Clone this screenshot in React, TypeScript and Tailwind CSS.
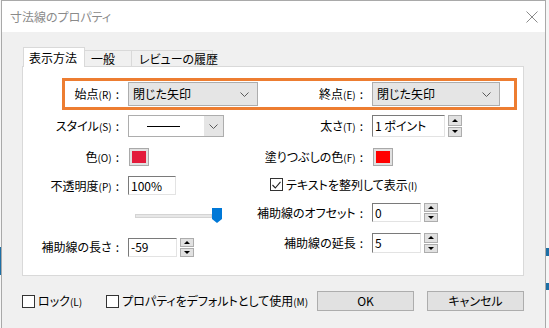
import React from 'react';

const Chevron = () => (
  <svg width="9" height="5" viewBox="0 0 9 5">
    <path d="M0.5 0.5 L4.5 4.5 L8.5 0.5" fill="none" stroke="#5a5a5a" strokeWidth="1" />
  </svg>
);

const Lbl: React.FC<{ text: string; k?: string }> = ({ text, k }) => (
  <span className="whitespace-nowrap">
    {text}
    {k && <span className="text-[10px]">({k})</span>}
    <span className="ml-[4px]">:</span>
  </span>
);

const GrayCombo: React.FC<{ w: string }> = ({ w }) => (
  <div className={`flex items-center h-[24px] ${w} bg-[#e5e5e5] border border-[#adadad] pl-[4px] pr-[8px]`}>
    <span className="flex-1">閉じた矢印</span>
    <Chevron />
  </div>
);

const TextBox: React.FC<{ w: string; h: string; value: string }> = ({ w, h, value }) => (
  <div
    className={`${w} ${h} bg-white border border-[#e3e3e3] border-t-[#7a7a7a] border-l-[#7a7a7a] flex items-center pl-[2px] leading-none whitespace-nowrap`}
  >
    {value}
  </div>
);

const Spinner: React.FC<{ h: string }> = ({ h }) => (
  <div className={`flex flex-col ml-[3px] w-[14px] ${h} gap-[1px]`}>
    <div className="flex-1 flex items-center justify-center bg-[#e1e1e1] border border-[#adadad]">
      <svg width="6" height="3" viewBox="0 0 6 3">
        <path d="M0 3 L3 0 L6 3 Z" fill="#000" />
      </svg>
    </div>
    <div className="flex-1 flex items-center justify-center bg-[#e1e1e1] border border-[#adadad]">
      <svg width="6" height="3" viewBox="0 0 6 3">
        <path d="M0 0 L3 3 L6 0 Z" fill="#000" />
      </svg>
    </div>
  </div>
);

const Swatch: React.FC<{ color: string }> = ({ color }) => (
  <div className="w-[20px] h-[18px] bg-[#e1e1e1] border border-[#a9a9a9] p-[2px]">
    <div className={`w-full h-full ${color}`} />
  </div>
);

const Box: React.FC<{ checked?: boolean }> = ({ checked }) => (
  <div className="w-[13px] h-[13px] bg-white border border-[#333] flex items-center justify-center">
    {checked && (
      <svg width="9" height="8" viewBox="0 0 9 8">
        <path d="M0.5 4 L3.3 7 L8.5 0.8" fill="none" stroke="#222" strokeWidth="1.1" />
      </svg>
    )}
  </div>
);

export default function App() {
  return (
    <div className="relative w-[549px] h-[328px] overflow-hidden bg-[#f6f6f6] text-[12px] text-black font-['Noto_Sans_CJK_JP',sans-serif] [font-feature-settings:'palt']">
      <span className="absolute left-0 top-[247px] w-[1px] h-[28px] bg-[#1d6fa5]" />
      <span className="absolute left-[546px] top-[248px] w-[3px] h-[8px] bg-[#1d6fa5]" />
      <span className="absolute left-[546px] top-[283px] w-[3px] h-[7px] bg-[#1d6fa5]" />

      <div className="ml-[1px] w-[545px] h-[328px] border-x border-t border-[#a9a9a9] bg-[#f0f0f0]">
        {/* title bar */}
        <div className="h-[31px] bg-white flex items-center justify-between pl-[8px] pr-[7px]">
          <span className="text-[#8a8a8a]">寸法線のプロパティ</span>
          <svg width="12" height="12" viewBox="0 0 12 12">
            <path d="M0.5 0.5 L11.5 11.5 M11.5 0.5 L0.5 11.5" stroke="#8a8a8a" strokeWidth="1" />
          </svg>
        </div>

        <div className="pt-[15px] pl-[20px]">
          {/* tabs */}
          <div className="flex items-end h-[19px] pl-[1px] whitespace-nowrap">
            <div className="relative z-10 -mb-px h-[20px] w-[62px] bg-white border-x border-t border-[#d9d9d9] flex items-center pl-[5px]">
              表示方法
            </div>
            <div className="h-[16px] w-[47px] border-r border-t border-[#d9d9d9] flex items-center pl-[6px]">
              一般
            </div>
            <div className="h-[16px] w-[81px] border-r border-t border-[#d9d9d9] flex items-center pl-[7px]">
              レビューの履歴
            </div>
          </div>

          {/* panel */}
          <div className="w-[502px] h-[210px] bg-white border border-[#d9d9d9]">
            <div className="mt-[11px] ml-[39px] w-[455px] h-[32px] border-[3px] border-[#ed7d31] flex items-center">
              <div className="w-[57px] flex justify-end pr-[3px]">
                <Lbl text="始点" k="R" />
              </div>
              <div className="ml-[6px]">
                <GrayCombo w="w-[130px]" />
              </div>
              <div className="w-[108px] flex justify-end pr-[3px]">
                <Lbl text="終点" k="E" />
              </div>
              <div className="ml-[6px]">
                <GrayCombo w="w-[128px]" />
              </div>
            </div>

            <div className="mt-[5px] h-[22px] flex items-center">
              <div className="w-[99px] flex justify-end pr-[3px]">
                <Lbl text="スタイル" k="S" />
              </div>
              <div className="ml-[6px] w-[130px]">
                <div className="flex h-[22px] w-[96px] border border-[#adadad]">
                  <div className="flex-1 bg-white flex items-center pl-[18px]">
                    <div className="w-[33px] h-[1px] bg-black" />
                  </div>
                  <div className="w-[19px] bg-[#e5e5e5] flex items-center justify-center">
                    <Chevron />
                  </div>
                </div>
              </div>
              <div className="w-[108px] flex justify-end pr-[3px]">
                <Lbl text="太さ" k="T" />
              </div>
              <div className="ml-[6px] flex items-center">
                <TextBox w="w-[73px]" h="h-[22px]" value="1 ポイント" />
                <Spinner h="h-[22px]" />
              </div>
            </div>

            <div className="mt-[11px] h-[18px] flex items-center">
              <div className="w-[99px] flex justify-end pr-[3px]">
                <Lbl text="色" k="O" />
              </div>
              <div className="ml-[7px] w-[129px]">
                <Swatch color="bg-[#e31a3a]" />
              </div>
              <div className="w-[108px] flex justify-end pr-[3px]">
                <Lbl text="塗りつぶしの色" k="F" />
              </div>
              <div className="ml-[7px]">
                <Swatch color="bg-[#ff0000]" />
              </div>
            </div>

            <div className="mt-[10px] h-[19px] flex items-center">
              <div className="w-[99px] flex justify-end pr-[3px]">
                <Lbl text="不透明度" k="P" />
              </div>
              <div className="ml-[6px] w-[130px]">
                <TextBox w="w-[48px]" h="h-[19px]" value="100%" />
              </div>
              <div className="ml-[12px] flex items-center gap-[3px] -mt-[2px]">
                <Box checked />
                <span className="whitespace-nowrap">
                  テキストを整列して表示<span className="text-[10px]">(I)</span>
                </span>
              </div>
            </div>

            <div className="flex">
              <div className="w-[235px]">
                <div className="mt-[13px] ml-[112px] h-[15px] flex items-center">
                  <div className="w-[77px] h-[4px] bg-[#e7e7e7] border border-[#d4d4d4]" />
                  <svg width="10" height="15" viewBox="0 0 10 15">
                    <path d="M0 0 H10 V11 L5 15 L0 11 Z" fill="#0078d7" />
                  </svg>
                </div>
                <div className="mt-[15px] h-[18px] flex items-center">
                  <div className="w-[99px] flex justify-end pr-[3px]">
                    <Lbl text="補助線の長さ" />
                  </div>
                  <div className="ml-[6px] flex items-center">
                    <TextBox w="w-[49px]" h="h-[19px]" value="-59" />
                    <Spinner h="h-[19px]" />
                  </div>
                </div>
              </div>
              <div>
                <div className="mt-[8px] h-[19px] flex items-center">
                  <div className="w-[108px] flex justify-end pr-[3px]">
                    <Lbl text="補助線のオフセット" />
                  </div>
                  <div className="ml-[6px] flex items-center">
                    <TextBox w="w-[49px]" h="h-[19px]" value="0" />
                    <Spinner h="h-[19px]" />
                  </div>
                </div>
                <div className="mt-[11px] h-[20px] flex items-center">
                  <div className="w-[108px] flex justify-end pr-[3px]">
                    <Lbl text="補助線の延長" />
                  </div>
                  <div className="ml-[6px] flex items-center">
                    <TextBox w="w-[49px]" h="h-[20px]" value="5" />
                    <Spinner h="h-[20px]" />
                  </div>
                </div>
              </div>
            </div>
          </div>

          {/* bottom */}
          <div className="mt-[15px] w-[502px] flex items-start">
            <div className="mt-[1px] flex items-center gap-[3px]">
              <Box />
              <span>
                ロック<span className="text-[10px]">(L)</span>
              </span>
            </div>
            <div className="mt-[1px] ml-[24px] flex items-center gap-[3px]">
              <Box />
              <span className="whitespace-nowrap">
                プロパティをデフォルトとして使用<span className="text-[10px]">(M)</span>
              </span>
            </div>
            <div className="ml-auto flex gap-[13px]">
              <div className="w-[97px] h-[20px] bg-[#e1e1e1] border border-[#adadad] flex items-center justify-center">
                OK
              </div>
              <div className="w-[97px] h-[20px] bg-[#e1e1e1] border border-[#adadad] flex items-center justify-center">
                キャンセル
              </div>
            </div>
          </div>
        </div>
      </div>
    </div>
  );
}
